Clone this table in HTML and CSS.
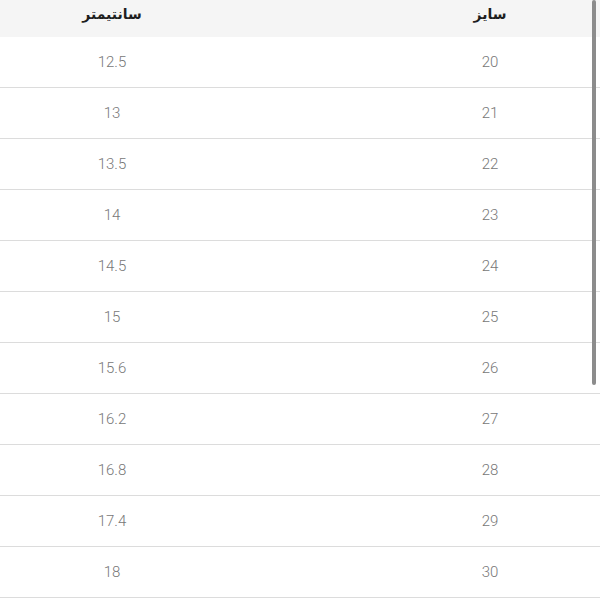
FILE: index.html
```html
<!DOCTYPE html>
<html lang="fa">
<head>
<meta charset="utf-8">
<title>جدول سایز</title>
<link rel="stylesheet" href="styles.css">
</head>
<body>
<div class="page">
  <div class="table">
    <div class="row head">
      <div class="cell c-size">سایز</div>
      <div class="cell c-cm">سانتیمتر</div>
    </div>
    <div class="row"><div class="cell c-size">20</div><div class="cell c-cm">12.5</div></div>
    <div class="row"><div class="cell c-size">21</div><div class="cell c-cm">13</div></div>
    <div class="row"><div class="cell c-size">22</div><div class="cell c-cm">13.5</div></div>
    <div class="row"><div class="cell c-size">23</div><div class="cell c-cm">14</div></div>
    <div class="row"><div class="cell c-size">24</div><div class="cell c-cm">14.5</div></div>
    <div class="row"><div class="cell c-size">25</div><div class="cell c-cm">15</div></div>
    <div class="row"><div class="cell c-size">26</div><div class="cell c-cm">15.6</div></div>
    <div class="row"><div class="cell c-size">27</div><div class="cell c-cm">16.2</div></div>
    <div class="row"><div class="cell c-size">28</div><div class="cell c-cm">16.8</div></div>
    <div class="row"><div class="cell c-size">29</div><div class="cell c-cm">17.4</div></div>
    <div class="row"><div class="cell c-size">30</div><div class="cell c-cm">18</div></div>
  </div>
  <div class="scrollbar"></div>
</div>
</body>
</html>
```

FILE: styles.css
```css
html, body {
  margin: 0;
  padding: 0;
  background: #ffffff;
}

.page {
  position: relative;
  width: 600px;
  height: 600px;
  overflow: hidden;
  font-family: Roboto, "DejaVu Sans", sans-serif;
}

.table {
  display: flex;
  flex-direction: column;
}

.row {
  display: grid;
  grid-template-columns: 224px 164px 204px 8px;
  height: 50px;
  border-bottom: 1px solid #dcdcdc;
  align-items: center;
}

.cell {
  text-align: center;
  font-size: 15px;
  color: #777777;
  font-weight: 300;
  padding-bottom: 1px;
}

.c-cm { grid-column: 1; grid-row: 1; }
.c-size { grid-column: 3; grid-row: 1; }

.row.head {
  height: 37px;
  border-bottom: none;
  background: #f5f5f5;
  align-items: start;
}

.row.head .cell {
  font-family: "DejaVu Sans", sans-serif;
  font-weight: bold;
  font-size: 14px;
  color: #1e1e1e;
  direction: rtl;
  padding-top: 6px;
  padding-bottom: 0;
}

.scrollbar {
  position: absolute;
  left: 592px;
  top: 0;
  width: 4px;
  height: 385px;
  border-radius: 2px;
  background: #8c8c8c;
}
```
